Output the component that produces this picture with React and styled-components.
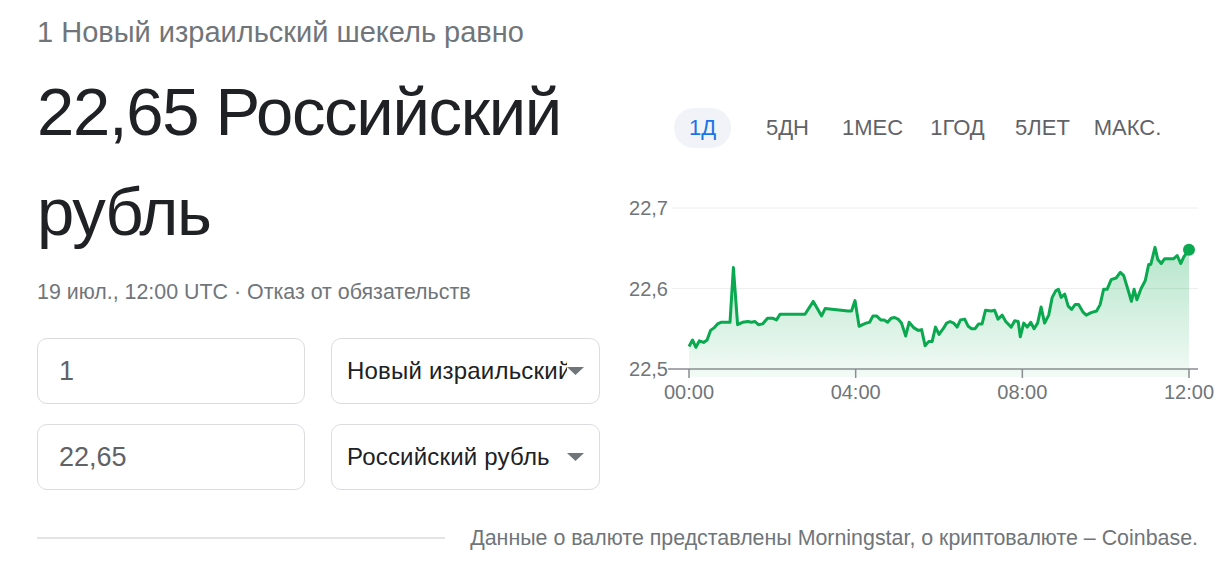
import React from 'react'
import styled, {createGlobalStyle} from 'styled-components'

const grey = '#70757a'
const ink = '#202124'
const green = '#0aa84f'
const border = '#dadce0'

// 1 day of quotes, [minute from 00:00, price]
const quotes = [
  [0, 22.528], [5, 22.536], [10, 22.527], [15, 22.535], [21, 22.533], [26, 22.536],
  [31, 22.548], [36, 22.551], [41, 22.556], [46, 22.558], [59, 22.558], [64, 22.626],
  [70, 22.555], [77, 22.558], [85, 22.559], [90, 22.558], [95, 22.559], [100, 22.555],
  [106, 22.556], [113, 22.563], [121, 22.563], [126, 22.561], [131, 22.568], [142, 22.568],
  [167, 22.568], [179, 22.584], [191, 22.566], [196, 22.575], [219, 22.573], [229, 22.572],
  [234, 22.572], [239, 22.585], [245, 22.553], [250, 22.555], [255, 22.557], [260, 22.558],
  [265, 22.566], [270, 22.566], [276, 22.561], [281, 22.561], [286, 22.558], [291, 22.563],
  [296, 22.564], [301, 22.562], [306, 22.557], [312, 22.541], [317, 22.558], [324, 22.551],
  [330, 22.548], [335, 22.549], [340, 22.529], [345, 22.534], [350, 22.534], [355, 22.552],
  [360, 22.543], [366, 22.55], [371, 22.557], [376, 22.559], [381, 22.557], [386, 22.552],
  [391, 22.561], [397, 22.562], [402, 22.553], [407, 22.55], [412, 22.55], [417, 22.556],
  [422, 22.556], [427, 22.573], [435, 22.572], [440, 22.573], [445, 22.562], [451, 22.567],
  [456, 22.559], [464, 22.552], [469, 22.56], [474, 22.559], [477, 22.54], [482, 22.557],
  [487, 22.552], [492, 22.558], [497, 22.55], [502, 22.557], [507, 22.577], [512, 22.557],
  [518, 22.567], [523, 22.589], [528, 22.597], [532, 22.599], [536, 22.589], [541, 22.593],
  [546, 22.578], [551, 22.574], [556, 22.58], [561, 22.58], [567, 22.571], [572, 22.567],
  [579, 22.57], [587, 22.572], [592, 22.58], [597, 22.599], [602, 22.599], [608, 22.611],
  [615, 22.613], [621, 22.62], [626, 22.616], [633, 22.596], [637, 22.584], [641, 22.599],
  [645, 22.586], [651, 22.6], [657, 22.61], [662, 22.63], [665, 22.63], [671, 22.651],
  [675, 22.636], [680, 22.631], [685, 22.637], [698, 22.637], [703, 22.641], [708, 22.631],
  [713, 22.64], [720, 22.648]
]

const ranges = ['1Д', '5ДН', '1МЕС', '1ГОД', '5ЛЕТ', 'МАКС.']
const levels = [
  {label: '22,7', value: 22.7},
  {label: '22,6', value: 22.6},
  {label: '22,5', value: 22.5}
]
const hours = ['00:00', '04:00', '08:00', '12:00']

// chart geometry
const X0 = 69
const X1 = 569
const BASE = 179
const PX_PER_UNIT = 805
const px = m => X0 + (m / 720) * (X1 - X0)
const py = v => BASE - (v - 22.5) * PX_PER_UNIT

const GlobalStyle = createGlobalStyle`
  body {
    margin: 0;
    background: #fff;
    font-family: "Liberation Sans", Arial, sans-serif;
  }
`

export default function App() {
  return (
    <>
      <GlobalStyle />
      <Page>
        <Lead>1 Новый израильский шекель равно</Lead>
        <Main>
          <Left>
            <Result>22,65 Российский рубль</Result>
            <Stamp>19 июл., 12:00 UTC · Отказ от обязательств</Stamp>
            <Converter>
              <Field>1</Field>
              <Select>
                <SelectLabel>Новый израильский шекель</SelectLabel>
                <Caret />
              </Select>
              <Field>22,65</Field>
              <Select>
                <SelectLabel>Российский рубль</SelectLabel>
                <Caret />
              </Select>
            </Converter>
          </Left>
          <Right>
            <Tabs>
              {ranges.map((r, i) => (
                <Tab key={r} active={i === 0}>
                  {r}
                </Tab>
              ))}
            </Tabs>
            <Chart />
          </Right>
        </Main>
        <Footer>
          <Rule />
          <Source>Данные о валюте представлены Morningstar, о криптовалюте – Coinbase.</Source>
        </Footer>
      </Page>
    </>
  )
}

function Caret() {
  return (
    <CaretIcon viewBox="0 0 17 8" width="17" height="8">
      <path d="M0 0h17L8.5 8z" fill={grey} />
    </CaretIcon>
  )
}

function Chart() {
  const line = quotes.map(([m, v], i) => `${i ? 'L' : 'M'}${px(m).toFixed(1)} ${py(v).toFixed(1)}`).join(' ')
  const area = `${line} L${X1} 187 L${X0} 187 Z`
  const last = quotes[quotes.length - 1]
  return (
    <ChartSvg width="578" height="215" viewBox="0 0 578 215">
      <defs>
        <linearGradient id="fill" x1="0" y1="0" x2="0" y2="1">
          <stop offset="0" stopColor={green} stopOpacity="0.3" />
          <stop offset="1" stopColor={green} stopOpacity="0.05" />
        </linearGradient>
      </defs>
      {levels.slice(0, 2).map(l => (
        <line key={l.label} x1="52" x2="578" y1={py(l.value)} y2={py(l.value)} stroke="#eeeeee" strokeWidth="1" />
      ))}
      <path d={area} fill="url(#fill)" />
      <line x1="48" x2="578" y1={BASE} y2={BASE} stroke="#8a8d91" strokeWidth="1.5" />
      {hours.map((h, i) => (
        <line key={h} x1={px(i * 240)} x2={px(i * 240)} y1={BASE} y2={BASE + 9} stroke="#8a8d91" strokeWidth="1.5" />
      ))}
      <path d={line} fill="none" stroke={green} strokeWidth="3" strokeLinejoin="round" />
      <circle cx={px(last[0])} cy={py(last[1])} r="6" fill={green} />
      {levels.map(l => (
        <AxisText key={l.label} x="48" y={py(l.value) + 7} textAnchor="end">
          {l.label}
        </AxisText>
      ))}
      {hours.map((h, i) => (
        <AxisText key={h} x={px(i * 240)} y="209" textAnchor="middle">
          {h}
        </AxisText>
      ))}
    </ChartSvg>
  )
}

const Page = styled.div`
  width: 1227px;
  box-sizing: border-box;
  padding: 15px 29px 0 37px;
`

const Lead = styled.div`
  font-size: 29px;
  line-height: 34px;
  color: ${grey};
`

const Main = styled.div`
  display: flex;
  margin-top: 13px;
`

const Left = styled.div`
  width: 563px;
  flex: none;
`

const Result = styled.h1`
  margin: 0;
  font-size: 67px;
  line-height: 100px;
  letter-spacing: -1.3px;
  font-weight: 400;
  color: ${ink};
`

const Stamp = styled.div`
  margin-top: 17px;
  font-size: 21.4px;
  line-height: 26px;
  color: ${grey};
`

const Converter = styled.div`
  display: grid;
  grid-template-columns: 268px 269px;
  grid-auto-rows: 66px;
  column-gap: 26px;
  row-gap: 20px;
  margin-top: 33px;
`

const Box = styled.div`
  box-sizing: border-box;
  border: 1px solid ${border};
  border-radius: 10px;
  display: flex;
  align-items: center;
`

const Field = styled(Box)`
  padding-left: 21px;
  font-size: 27px;
  color: #5f6368;
`

const Select = styled(Box)`
  padding: 0 15px;
  font-size: 24px;
  letter-spacing: 0.2px;
  color: ${ink};
`

const SelectLabel = styled.span`
  flex: 1;
  min-width: 0;
  overflow: hidden;
  white-space: nowrap;
`

const CaretIcon = styled.svg`
  flex: none;
  display: block;
`

const Right = styled.div`
  flex: 1;
  margin-left: 20px;
  padding-top: 46px;
`

const Tabs = styled.div`
  display: grid;
  grid-template-columns: repeat(6, 85px);
  margin-left: 40px;
`

const Tab = styled.div`
  justify-self: center;
  height: 40px;
  padding: 0 15px;
  border-radius: 20px;
  display: flex;
  align-items: center;
  font-size: 22px;
  white-space: nowrap;
  color: ${p => (p.active ? '#1a73e8' : '#5f6368')};
  background: ${p => (p.active ? '#f1f3f8' : 'transparent')};
`

const ChartSvg = styled.svg`
  display: block;
  margin-top: 42px;
  overflow: visible;
`

const AxisText = styled.text`
  font-family: "Liberation Sans", Arial, sans-serif;
  font-size: 20px;
  fill: ${grey};
`

const Footer = styled.div`
  display: flex;
  align-items: center;
  gap: 25px;
  margin-top: 35px;
`

const Rule = styled.div`
  flex: 1;
  height: 2px;
  background: #e3e4e6;
`

const Source = styled.div`
  font-size: 21.4px;
  line-height: 26px;
  color: ${grey};
  white-space: nowrap;
`
